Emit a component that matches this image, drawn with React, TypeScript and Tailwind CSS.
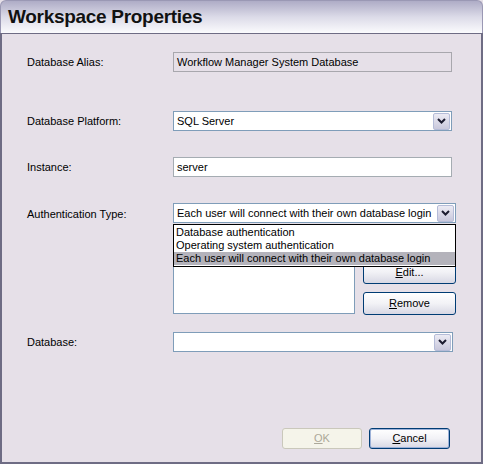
import React from 'react';

const font = { fontFamily: '"Liberation Sans", Arial, sans-serif' };

function Chevron() {
    return (
        <svg width="9" height="6" viewBox="0 0 9 6">
            <path d="M1 1 L4.5 4.5 L8 1" fill="none" stroke="#1c1c30" strokeWidth="2" />
        </svg>
    );
}

function ComboButton() {
    return (
        <div className="flex h-[17px] w-[17px] shrink-0 items-center justify-center rounded-[2px] border border-[#b5bcd8] bg-gradient-to-b from-[#ecebf4] to-[#c9c8dc]">
            <Chevron />
        </div>
    );
}

function Combo({ value, className }: { value: string; className: string }) {
    return (
        <div className={`flex h-[20px] items-center justify-between border border-[#7f9db9] bg-white pl-[3px] pr-[1px] ${className}`}>
            <span className="whitespace-nowrap leading-none text-black">{value}</span>
            <ComboButton />
        </div>
    );
}

function XpButton({ children, disabled, isDefault, className }: { children: React.ReactNode; disabled?: boolean; isDefault?: boolean; className: string }) {
    if (disabled) {
        return (
            <div className={`flex items-center justify-center rounded-[3px] border border-[#cac8bb] bg-[#f5f4ea] text-[#aca899] ${className}`}>
                {children}
            </div>
        );
    }
    return (
        <div className={`flex items-center justify-center rounded-[3px] border ${isDefault ? 'border-[#003c74] shadow-[inset_0_0_0_1px_#9cb1d8]' : 'border-[#003c74]'} bg-gradient-to-b from-white via-[#f2f2f6] to-[#d8d8e4] text-black ${className}`}>
            {children}
        </div>
    );
}

export default function App() {
    return (
        <div className="flex h-[464px] w-[483px] flex-col bg-[#e6e0e8]" style={font}>
            {/* title bar */}
            <div className="flex h-[33px] items-center rounded-t-[6px] border-x border-t border-[#9a98b4] bg-gradient-to-b from-[#aeacc6] via-[#dcdbe8] to-[#fbfbfd] pl-[7px]">
                <span className="text-[19px] font-bold tracking-[-0.3px] text-[#111]">Workspace Properties</span>
            </div>

            {/* body */}
            <div className="flex flex-1 flex-col border-x-2 border-b-2 border-t border-[#6e6c84] pl-[25px] text-[11px] text-black">
                <div className="mt-[18px] flex items-center">
                    <span className="w-[146px]">Database Alias:</span>
                    <div className="flex h-[20px] w-[279px] items-center border border-[#a8a7ad] pl-[3px]">Workflow Manager System Database</div>
                </div>

                <div className="mt-[39px] flex items-center">
                    <span className="w-[146px]">Database Platform:</span>
                    <Combo value="SQL Server" className="w-[279px]" />
                </div>

                <div className="mt-[26px] flex items-center">
                    <span className="w-[146px]">Instance:</span>
                    <div className="flex h-[20px] w-[279px] items-center border border-[#a5acb2] bg-white pl-[3px]">server</div>
                </div>

                <div className="relative mt-[26px] flex flex-col">
                    <div className="flex items-start">
                        <span className="w-[146px] pt-[3px]">Authentication Type:</span>
                        <Combo value="Each user will connect with their own database login" className="w-[283px]" />
                    </div>

                    <div className="ml-[146px] mt-[1px] flex gap-[8px]">
                        <div className="h-[90px] w-[182px] border border-[#7f9db9] bg-white" />
                        <div className="flex flex-col gap-[8px] pt-[36px]">
                            <XpButton className="h-[24px] w-[93px]"><span><span className="underline">E</span>dit...</span></XpButton>
                            <XpButton className="h-[23px] w-[93px]"><span><span className="underline">R</span>emove</span></XpButton>
                        </div>
                    </div>

                    {/* open dropdown list */}
                    <div className="absolute left-[146px] top-[21px] flex w-[283px] flex-col whitespace-nowrap border border-black bg-white py-[1px] leading-[13px]">
                        <span className="pl-[2px]">Database authentication</span>
                        <span className="pl-[2px]">Operating system authentication</span>
                        <span className="bg-[#b4b3bb] pl-[2px]">Each user will connect with their own database login</span>
                    </div>
                </div>

                <div className="mt-[17px] flex items-center">
                    <span className="w-[146px]">Database:</span>
                    <Combo value="" className="w-[280px]" />
                </div>

                <div className="mt-auto mb-[13px] flex justify-end gap-[7px] pr-[31px]">
                    <XpButton disabled className="h-[21px] w-[80px]"><span><span className="underline">O</span>K</span></XpButton>
                    <XpButton isDefault className="h-[21px] w-[81px]"><span><span className="underline">C</span>ancel</span></XpButton>
                </div>
            </div>
        </div>
    );
}
